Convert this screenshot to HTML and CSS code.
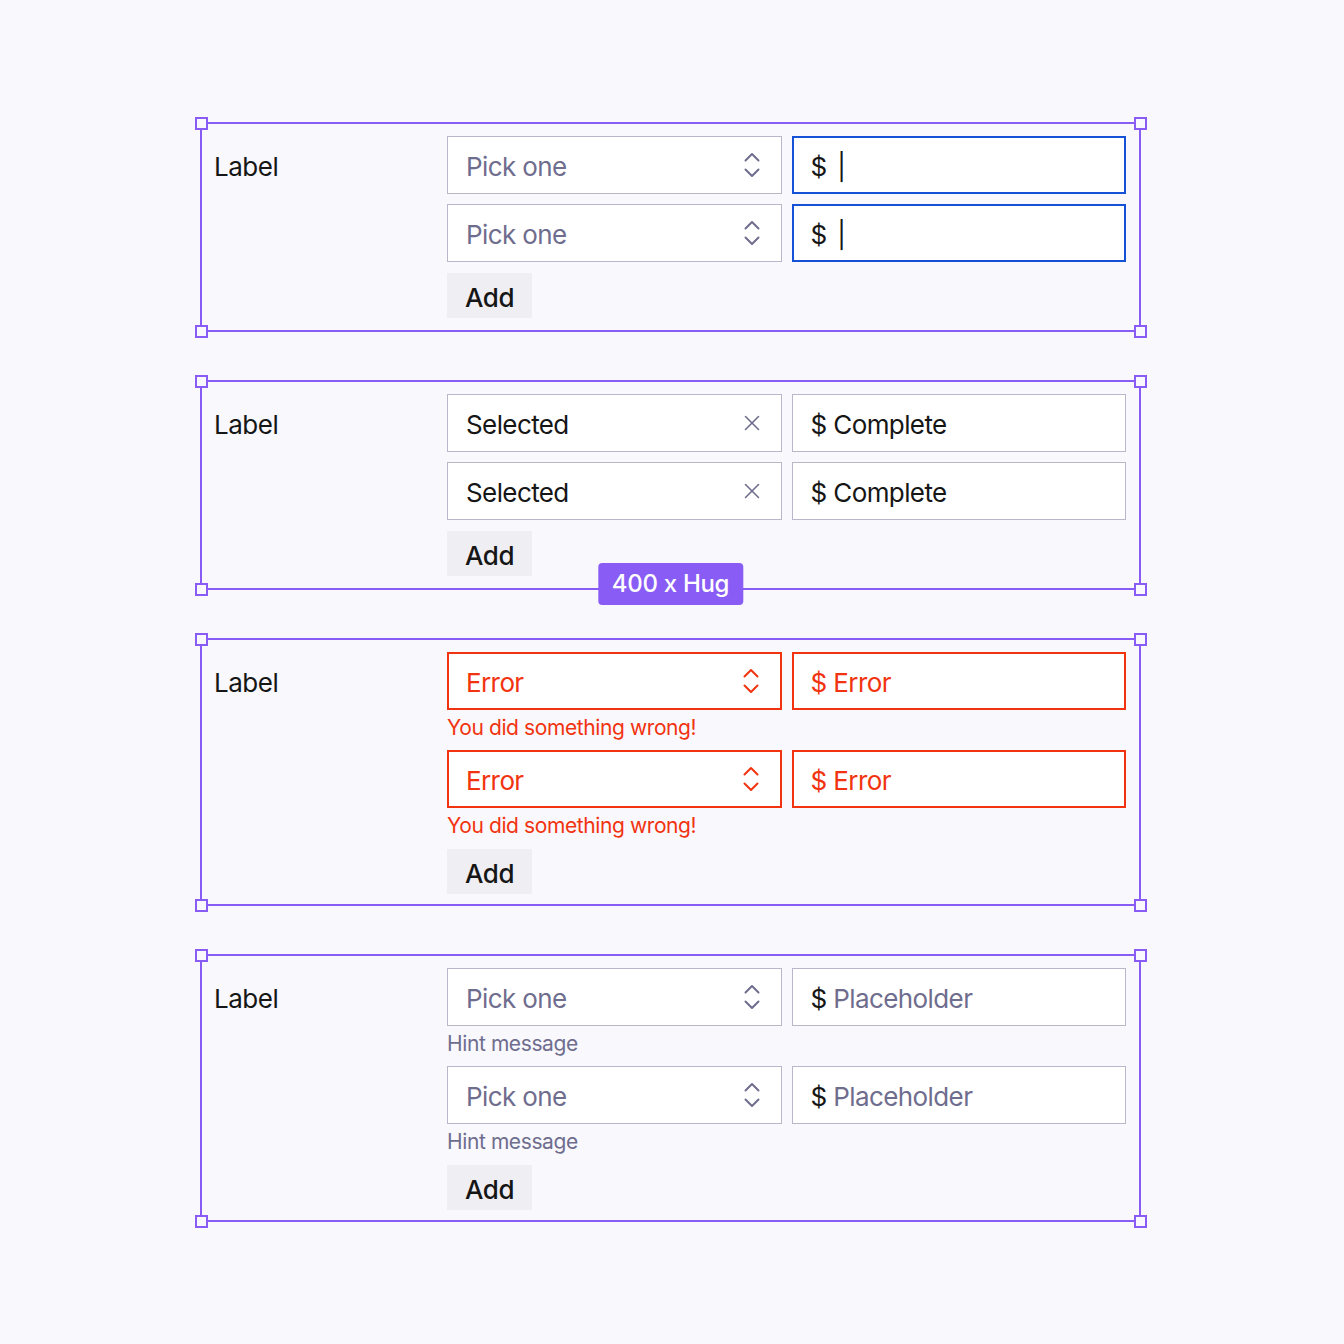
FILE: index.html
```html
<!DOCTYPE html>
<html>
<head>
    <meta charset="UTF-8">
    <title>Price rows</title>
    <link rel="stylesheet" href="styles.css">
</head>
<body>
    <div class="stack">

        <!-- focused state -->
        <div class="frame">
            <span class="handle tl"></span><span class="handle tr"></span>
            <span class="handle bl"></span><span class="handle br"></span>
            <div class="label">Label</div>
            <div class="fields">
                <div class="group">
                    <div class="row">
                        <div class="field select">
                            <span class="value placeholder">Pick one</span>
                            <svg class="icon" width="16" height="26" viewBox="0 0 16 26"><polyline points="1.5,8.5 8,2 14.5,8.5"/><polyline points="1.5,17.5 8,24 14.5,17.5"/></svg>
                        </div>
                        <div class="field focus"><span class="value">$ <span class="caret">|</span></span></div>
                    </div>
                </div>
                <div class="group">
                    <div class="row">
                        <div class="field select">
                            <span class="value placeholder">Pick one</span>
                            <svg class="icon" width="16" height="26" viewBox="0 0 16 26"><polyline points="1.5,8.5 8,2 14.5,8.5"/><polyline points="1.5,17.5 8,24 14.5,17.5"/></svg>
                        </div>
                        <div class="field focus"><span class="value">$ <span class="caret">|</span></span></div>
                    </div>
                </div>
                <button class="add">Add</button>
            </div>
        </div>

        <!-- filled state -->
        <div class="frame">
            <span class="handle tl"></span><span class="handle tr"></span>
            <span class="handle bl"></span><span class="handle br"></span>
            <div class="size-badge">400 x Hug</div>
            <div class="label">Label</div>
            <div class="fields">
                <div class="group">
                    <div class="row">
                        <div class="field select">
                            <span class="value">Selected</span>
                            <svg class="icon clear" width="16" height="16" viewBox="0 0 16 16"><line x1="1.5" y1="1.5" x2="14.5" y2="14.5"/><line x1="14.5" y1="1.5" x2="1.5" y2="14.5"/></svg>
                        </div>
                        <div class="field"><span class="value">$ Complete</span></div>
                    </div>
                </div>
                <div class="group">
                    <div class="row">
                        <div class="field select">
                            <span class="value">Selected</span>
                            <svg class="icon clear" width="16" height="16" viewBox="0 0 16 16"><line x1="1.5" y1="1.5" x2="14.5" y2="14.5"/><line x1="14.5" y1="1.5" x2="1.5" y2="14.5"/></svg>
                        </div>
                        <div class="field"><span class="value">$ Complete</span></div>
                    </div>
                </div>
                <button class="add">Add</button>
            </div>
        </div>

        <!-- error state -->
        <div class="frame with-messages">
            <span class="handle tl"></span><span class="handle tr"></span>
            <span class="handle bl"></span><span class="handle br"></span>
            <div class="label">Label</div>
            <div class="fields">
                <div class="group">
                    <div class="row">
                        <div class="field select error">
                            <span class="value">Error</span>
                            <svg class="icon" width="16" height="26" viewBox="0 0 16 26"><polyline points="1.5,8.5 8,2 14.5,8.5"/><polyline points="1.5,17.5 8,24 14.5,17.5"/></svg>
                        </div>
                        <div class="field error"><span class="value">$ Error</span></div>
                    </div>
                    <div class="message error-text">You did something wrong!</div>
                </div>
                <div class="group">
                    <div class="row">
                        <div class="field select error">
                            <span class="value">Error</span>
                            <svg class="icon" width="16" height="26" viewBox="0 0 16 26"><polyline points="1.5,8.5 8,2 14.5,8.5"/><polyline points="1.5,17.5 8,24 14.5,17.5"/></svg>
                        </div>
                        <div class="field error"><span class="value">$ Error</span></div>
                    </div>
                    <div class="message error-text">You did something wrong!</div>
                </div>
                <button class="add">Add</button>
            </div>
        </div>

        <!-- hint state -->
        <div class="frame with-messages">
            <span class="handle tl"></span><span class="handle tr"></span>
            <span class="handle bl"></span><span class="handle br"></span>
            <div class="label">Label</div>
            <div class="fields">
                <div class="group">
                    <div class="row">
                        <div class="field select">
                            <span class="value placeholder">Pick one</span>
                            <svg class="icon" width="16" height="26" viewBox="0 0 16 26"><polyline points="1.5,8.5 8,2 14.5,8.5"/><polyline points="1.5,17.5 8,24 14.5,17.5"/></svg>
                        </div>
                        <div class="field"><span class="value">$ <span class="placeholder">Placeholder</span></span></div>
                    </div>
                    <div class="message">Hint message</div>
                </div>
                <div class="group">
                    <div class="row">
                        <div class="field select">
                            <span class="value placeholder">Pick one</span>
                            <svg class="icon" width="16" height="26" viewBox="0 0 16 26"><polyline points="1.5,8.5 8,2 14.5,8.5"/><polyline points="1.5,17.5 8,24 14.5,17.5"/></svg>
                        </div>
                        <div class="field"><span class="value">$ <span class="placeholder">Placeholder</span></span></div>
                    </div>
                    <div class="message">Hint message</div>
                </div>
                <button class="add">Add</button>
            </div>
        </div>

    </div>
</body>
</html>
```

FILE: styles.css
```css
body {
    margin: 0;
    background-color: #f8f8fd;
    color: #161616;
    font-family: 'Inter', 'Noto Sans', sans-serif;
}

.stack {
    display: flex;
    flex-direction: column;
    gap: 48px;
    padding: 122px 0 100px 200px;
}

.frame {
    position: relative;
    width: 941px;
    box-sizing: border-box;
    border: 2px solid #8a5cf6;
    padding: 12px 13px 12px 12px;
    display: grid;
    grid-template-columns: 233px 1fr;
}

.frame.with-messages {
    padding-bottom: 10px;
}

.handle {
    position: absolute;
    width: 13px;
    height: 13px;
    box-sizing: border-box;
    border: 2px solid #8a5cf6;
    background-color: #f8f8fd;
    z-index: 1;
}

.handle.tl { top: -7px; left: -7px; }
.handle.tr { top: -7px; right: -8px; }
.handle.bl { bottom: -8px; left: -7px; }
.handle.br { bottom: -8px; right: -8px; }

.size-badge {
    position: absolute;
    left: 50%;
    bottom: -17px;
    transform: translateX(-50%);
    background-color: #8a5cf6;
    color: white;
    font-size: 24px;
    font-weight: 500;
    letter-spacing: -0.3px;
    line-height: 42px;
    padding: 0 14px;
    border-radius: 4px;
    z-index: 1;
}

.label {
    font-size: 26px;
    letter-spacing: -0.5px;
    line-height: 58px;
    padding-top: 2px;
}

.fields {
    display: flex;
    flex-direction: column;
    align-items: flex-start;
    gap: 10px;
}

.group {
    display: flex;
    flex-direction: column;
    align-self: stretch;
}

.row {
    display: grid;
    grid-template-columns: 1fr 1fr;
    gap: 10px;
}

.field {
    height: 58px;
    box-sizing: border-box;
    border: 1px solid #b9b7cc;
    background-color: #fff;
    display: flex;
    align-items: center;
    justify-content: space-between;
    padding: 0 21px 0 18px;
    font-size: 26px;
    letter-spacing: -0.6px;
}

.field .value {
    padding-top: 3px;
}

.field.focus {
    border: 2px solid #1551d6;
    padding-left: 17px;
}

.field.error {
    border: 2px solid #f2330f;
    padding-left: 17px;
    color: #f2330f;
}

.caret {
    margin-left: 4px;
}

.placeholder {
    color: #6f6d8e;
}

.icon {
    fill: none;
    stroke: #6f6d8e;
    stroke-width: 2;
    stroke-linecap: round;
    stroke-linejoin: round;
}

.icon.clear {
    stroke-width: 1.6;
}

.field.error .icon {
    stroke: #f2330f;
}

.message {
    margin-top: 6px;
    font-size: 21px;
    letter-spacing: -0.4px;
    line-height: 24px;
    color: #6f6d8e;
}

.message.error-text {
    color: #f2330f;
}

.add {
    font-family: inherit;
    font-size: 26px;
    font-weight: 500;
    letter-spacing: -0.4px;
    color: #161616;
    background-color: #efeff3;
    border: none;
    height: 45px;
    padding: 3px 18px 0;
    margin-top: 1px;
}
```
